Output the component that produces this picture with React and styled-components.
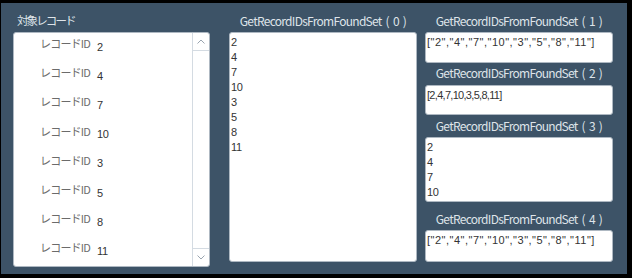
import React from "react";
import styled, { createGlobalStyle } from "styled-components";

const Global = createGlobalStyle`
  html, body { margin: 0; padding: 0; background: #000; }
  body { width: 632px; height: 278px; overflow: hidden; font-family: "Noto Sans CJK JP", sans-serif; }
`;

const Frame = styled.div`
  width: 632px;
  height: 278px;
  box-sizing: border-box;
  padding: 3px 5px 4px 1px;
  background: #000;
`;

const Panel = styled.div`
  height: 100%;
  background: #3d5367;
  box-sizing: border-box;
  padding: 0 14px 7px 12px;
  display: flex;
  align-items: flex-start;
`;

const Column = styled.div`
  width: ${(p) => p.$w}px;
  flex: none;
  display: flex;
  flex-direction: column;
  margin-left: ${(p) => p.$ml || 0}px;
`;

const Heading = styled.div`
  height: ${(p) => p.$h}px;
  box-sizing: border-box;
  padding-top: ${(p) => p.$pt || 0}px;
  padding-bottom: ${(p) => p.$pb || 0}px;
  padding-left: ${(p) => (p.$left ? 4 : 0)}px;
  display: flex;
  align-items: center;
  justify-content: ${(p) => (p.$left ? "flex-start" : "center")};
  color: #dfe4e9;
  font-family: "Noto Sans CJK JP", sans-serif;
  font-size: ${(p) => (p.$left ? 11.5 : 12)}px;
  letter-spacing: ${(p) => (p.$left ? -1.9 : -0.72)}px;
  word-spacing: 2px;
  white-space: pre;
`;

const Box = styled.div`
  height: ${(p) => p.$h}px;
  box-sizing: border-box;
  background: #fff;
  border: 1px solid #aeb8c2;
  border-radius: 3px;
  padding: 2px 1px;
  font-family: "Liberation Sans", Arial, sans-serif;
  font-size: 11px;
  line-height: 15px;
  letter-spacing: ${(p) => p.$ls ?? -0.3}px;
  color: #333;
  overflow: hidden;
  white-space: pre;
`;

const List = styled.div`
  height: 235px;
  box-sizing: border-box;
  background: #fff;
  border: 1px solid #aeb8c2;
  border-radius: 3px;
  display: flex;
  overflow: hidden;
`;

const Rows = styled.div`
  flex: 1;
`;

const Row = styled.div`
  height: 29.2px;
  display: flex;
  align-items: center;
  padding-left: 26px;
`;

const RowLabel = styled.span`
  width: 57px;
  flex: none;
  white-space: nowrap;
  color: #6b6b6b;
  font-family: "Noto Sans CJK JP", sans-serif;
  font-size: 11px;
  letter-spacing: -0.8px;
  margin-top: -9px;
`;

const RowValue = styled.span`
  color: #333;
  font-family: "Liberation Sans", Arial, sans-serif;
  font-size: 11px;
  letter-spacing: -0.3px;
  margin-top: -2px;
`;

const Scrollbar = styled.div`
  width: 16px;
  flex: none;
  border-left: 1px solid #d4dbe2;
  display: flex;
  flex-direction: column;
  justify-content: space-between;
`;

const ScrollButton = styled.div`
  height: 17px;
  display: flex;
  align-items: center;
  justify-content: center;
  border-${(p) => (p.$down ? "top" : "bottom")}: 1px solid #d4dbe2;
`;

const Chevron = ({ down }) => (
  <svg width="8" height="5" viewBox="0 0 8 5">
    <path
      d={down ? "M0.5 0.5 L4 4 L7.5 0.5" : "M0.5 4.5 L4 1 L7.5 4.5"}
      fill="none"
      stroke="#9aa5b0"
      strokeWidth="1"
    />
  </svg>
);

const ids = [2, 4, 7, 10, 3, 5, 8, 11];
const jsonText = '["2","4","7","10","3","5","8","11"]';

export default function App() {
  return (
    <>
      <Global />
      <Frame>
        <Panel>
          <Column $w={197}>
            <Heading $h={29} $left $pt={5}>対象レコード</Heading>
            <List>
              <Rows>
                {ids.map((id) => (
                  <Row key={id}>
                    <RowLabel>レコードID</RowLabel>
                    <RowValue>{id}</RowValue>
                  </Row>
                ))}
              </Rows>
              <Scrollbar>
                <ScrollButton><Chevron /></ScrollButton>
                <ScrollButton $down><Chevron down /></ScrollButton>
              </Scrollbar>
            </List>
          </Column>
          <Column $w={188} $ml={19}>
            <Heading $h={29} $pt={5}>GetRecordIDsFromFoundSet ( 0 )</Heading>
            <Box $h={230}>{ids.join("\n")}</Box>
          </Column>
          <Column $w={188} $ml={8}>
            <Heading $h={29} $pt={5}>GetRecordIDsFromFoundSet ( 1 )</Heading>
            <Box $h={31} $ls={0.5}>{jsonText}</Box>
            <Heading $h={22} $pb={4}>GetRecordIDsFromFoundSet ( 2 )</Heading>
            <Box $h={30} $ls={-0.7}>[2,4,7,10,3,5,8,11]</Box>
            <Heading $h={22} $pb={2}>GetRecordIDsFromFoundSet ( 3 )</Heading>
            <Box $h={65}>{"2\n4\n7\n10"}</Box>
            <Heading $h={28} $pt={4}>GetRecordIDsFromFoundSet ( 4 )</Heading>
            <Box $h={32} $ls={0.5}>{jsonText}</Box>
          </Column>
        </Panel>
      </Frame>
    </>
  );
}
